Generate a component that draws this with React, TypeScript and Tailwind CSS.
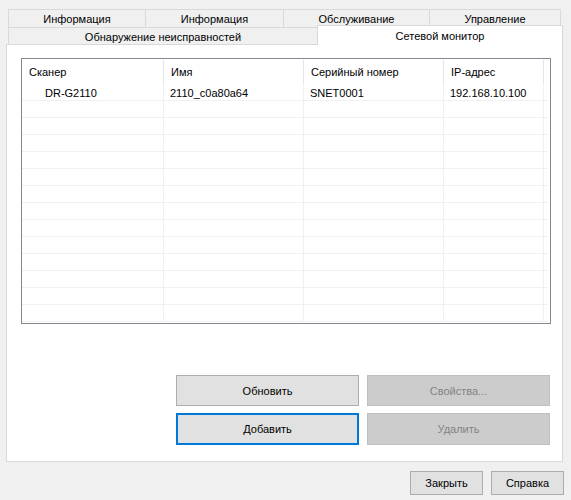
import React from "react";

const font = { fontFamily: '"Liberation Sans", "Noto Sans", sans-serif' };

type Row = { scanner: string; name: string; serial: string; ip: string };

const rows: Row[] = [
  { scanner: "DR-G2110", name: "2110_c0a80a64", serial: "SNET0001", ip: "192.168.10.100" },
];

const EMPTY_ROWS = 13;

function Cell({ w, children, indent }: { w: string; children?: React.ReactNode; indent?: boolean }) {
  return (
    <div className={`${w} h-full border-r border-[#f0f0f0] flex items-center pt-[2px] ${indent ? "pl-[23px]" : "pl-[6px]"} whitespace-nowrap overflow-hidden`}>
      {children}
    </div>
  );
}

function HeadCell({ w, children }: { w: string; children?: React.ReactNode }) {
  return (
    <div className={`${w} h-full relative flex items-center pt-[1px] pl-[7px] whitespace-nowrap`}>
      {children}
      <div className="absolute right-0 top-[1px] bottom-0 w-px bg-[#e5e5e5]" />
    </div>
  );
}

function ListRow({ r }: { r?: Row }) {
  return (
    <div className="flex h-[17px] border-b border-[#f0f0f0] w-[526px]">
      <Cell w="w-[142px]" indent>{r?.scanner}</Cell>
      <Cell w="w-[140px]">{r?.name}</Cell>
      <Cell w="w-[140px]">{r?.serial}</Cell>
      <Cell w="w-[100px]">{r?.ip}</Cell>
    </div>
  );
}

export default function App() {
  return (
    <div className="w-[571px] h-[500px] bg-[#f0f0f0] text-[11px] text-black overflow-hidden" style={font}>
      {/* tab strip */}
      <div className="pt-[9px] pl-[8px]">
        <div className="flex h-[18px]">
          <div className="w-[137px] border-t border-l border-[#d9d9d9] flex items-center justify-center pt-[1px] leading-none">Информация</div>
          <div className="w-[138px] border-t border-l border-[#d9d9d9] flex items-center justify-center pt-[1px] leading-none">Информация</div>
          <div className="w-[146px] border-t border-l border-[#d9d9d9] flex items-center justify-center pt-[1px] leading-none">Обслуживание</div>
          <div className="w-[132px] border-t border-l border-r border-[#d9d9d9] flex items-center justify-center pt-[1px] leading-none">Управление</div>
        </div>
        <div className="flex h-[18px] items-end">
          <div className="w-[309px] h-[18px] border-t border-l border-[#d9d9d9] flex items-center justify-center pt-[1px] leading-none">Обнаружение неисправностей</div>
          <div className="relative z-10 w-[246px] h-[20px] bg-white border-t border-l border-r border-[#d9d9d9] flex items-start justify-center pt-[5px] leading-none">Сетевой монитор</div>
        </div>
      </div>

      {/* tab page */}
      <div className="ml-[6px] -mt-px w-[557px] h-[418px] bg-white border border-[#d9d9d9]">
        <div className="pl-[14px] pt-[13px]">
          <div className="w-[530px] h-[266px] border border-[#828790] overflow-hidden">
            <div className="flex h-[25px]">
              <HeadCell w="w-[142px]">Сканер</HeadCell>
              <HeadCell w="w-[140px]">Имя</HeadCell>
              <HeadCell w="w-[140px]">Серийный номер</HeadCell>
              <HeadCell w="w-[100px]">IP-адрес</HeadCell>
            </div>
            {rows.map((r) => (
              <ListRow key={r.serial} r={r} />
            ))}
            {Array.from({ length: EMPTY_ROWS }).map((_, i) => (
              <ListRow key={i} />
            ))}
          </div>
        </div>

        <div className="ml-[169px] mt-[51px] grid grid-cols-[183px_183px] gap-x-[8px] gap-y-[7px]">
          <button className="h-[31px] pt-[1px] bg-[#e1e1e1] border border-[#adadad] text-black">Обновить</button>
          <button className="h-[31px] pt-[1px] bg-[#cccccc] border border-[#bfbfbf] text-[#838383]">Свойства...</button>
          <button className="h-[32px] pt-[1px] bg-[#e1e1e1] border-2 border-[#0078d7] text-black">Добавить</button>
          <button className="h-[32px] pt-[1px] bg-[#cccccc] border border-[#bfbfbf] text-[#838383]">Удалить</button>
        </div>
      </div>

      {/* dialog buttons */}
      <div className="flex justify-end gap-[8px] pr-[7px] mt-[9px]">
        <button className="w-[73px] h-[24px] pt-[1px] bg-[#e1e1e1] border border-[#adadad]">Закрыть</button>
        <button className="w-[73px] h-[24px] pt-[1px] bg-[#e1e1e1] border border-[#adadad]">Справка</button>
      </div>
    </div>
  );
}
